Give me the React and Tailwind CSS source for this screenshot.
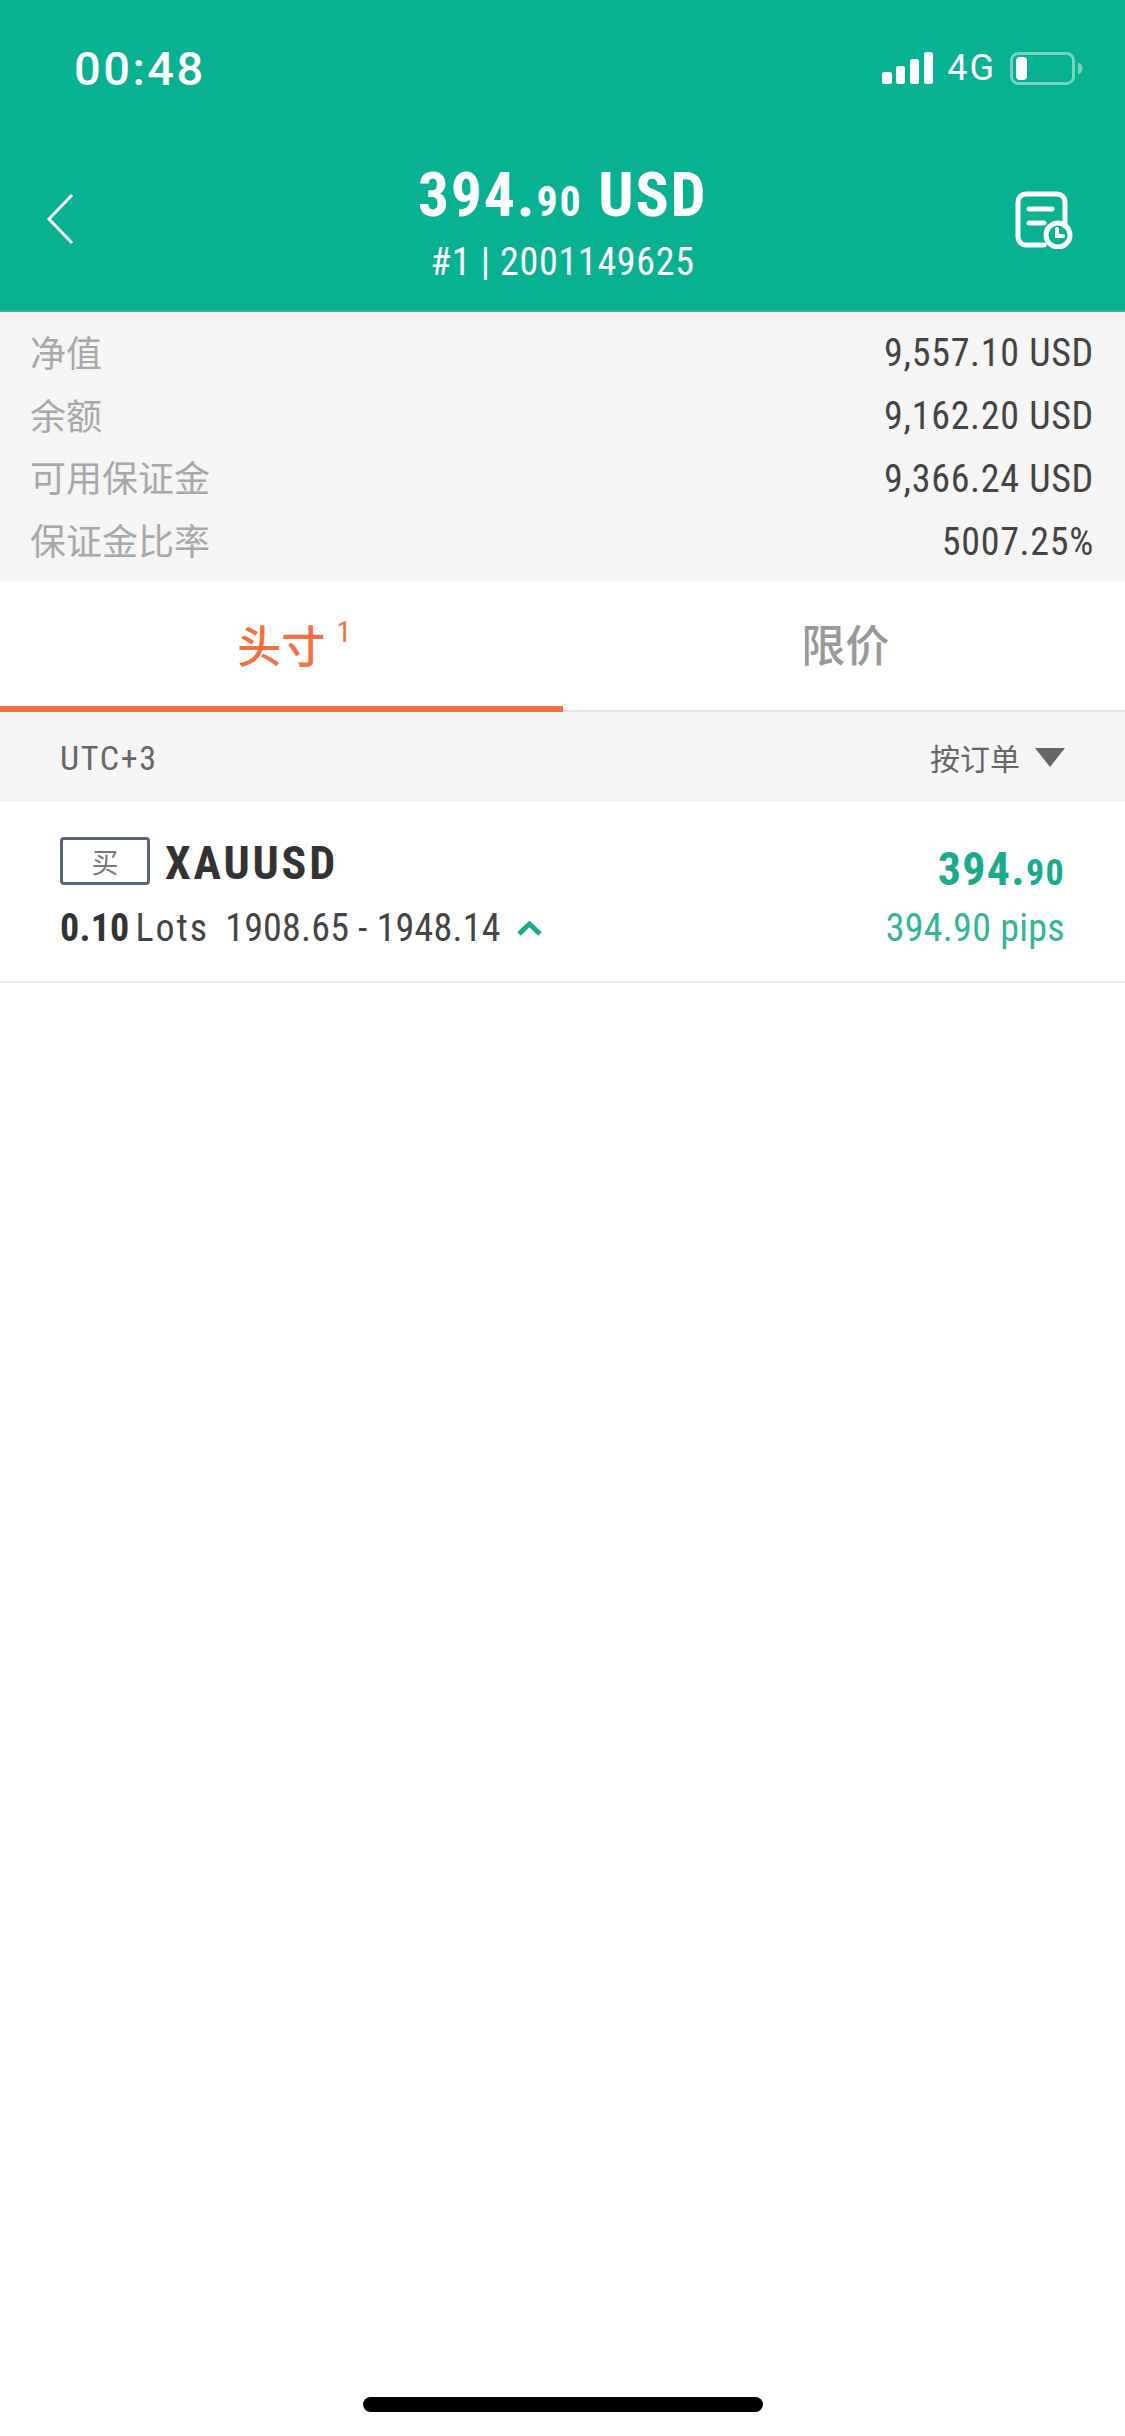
const din = "font-['Liberation_Sans_Narrow','Roboto_Condensed','Roboto','Noto_Sans_CJK_SC',sans-serif]";
const cjk = "font-['Noto_Sans_CJK_SC','Noto_Sans',sans-serif]";

function Signal() {
  return (
    <svg width="51" height="33" viewBox="0 0 51 33" fill="white">
      <rect x="0" y="20" width="10" height="12" rx="2.5" />
      <rect x="14" y="14" width="9" height="18" rx="2.5" />
      <rect x="28" y="7" width="9" height="25" rx="2.5" />
      <rect x="42" y="0" width="9" height="32" rx="2.5" />
    </svg>
  );
}

function Battery() {
  return (
    <svg width="73" height="33" viewBox="0 0 73 33" fill="none">
      <rect x="1.5" y="1.5" width="62" height="30" rx="7" stroke="white" strokeOpacity="0.45" strokeWidth="3" />
      <rect x="6" y="5" width="11" height="23" rx="4" fill="white" />
      <path d="M68 10.5c3 1 4.500 3.200 4.500 6s-1.500 5-4.500 6z" fill="white" fillOpacity="0.45" />
    </svg>
  );
}

function Back() {
  return (
    <svg className="mb-[12px]" width="28" height="52" viewBox="0 0 28 52" fill="none" stroke="white" strokeWidth="3">
      <path d="M26 2 3 26l23 24" />
    </svg>
  );
}

function Orders() {
  return (
    <svg className="mb-[10px]" width="58" height="58" viewBox="0 0 58 58" fill="none" stroke="white" strokeLinecap="round">
      <path d="M29 54H11a8 8 0 0 1-8-8V11a8 8 0 0 1 8-8h31a8 8 0 0 1 8 8v24" strokeWidth="5" />
      <path d="M14 18h23M14 32h15" strokeWidth="5" />
      <circle cx="43" cy="44" r="12" strokeWidth="5" />
      <path d="M42 38v7h6" strokeWidth="4" />
    </svg>
  );
}

function Stat({ label, value }) {
  return (
    <div className="flex h-[62.75px] items-center justify-between">
      <span className={`${cjk} -ml-[1px] pb-[5px] text-[36px] leading-none text-[#a8a8a8]`}>{label}</span>
      <span className={`${din} text-[38px] leading-none tracking-[0.7px] text-[#444444]`}>{value}</span>
    </div>
  );
}

export default function App() {
  return (
    <div className="flex min-h-[2436px] flex-col bg-white">
      <header className="h-[312px] border-b-2 border-[#3aaf98] bg-[#08b192] text-white">
        <div className="flex h-[164px] items-start justify-between pt-[46px] pr-[42px] pl-[74px]">
          <span className="font-['Roboto',sans-serif] text-[47px] font-medium leading-[46px] tracking-[2.5px]">00:48</span>
          <div className="flex items-center pt-[6px]">
            <Signal />
            <span className="mr-[14px] ml-[14px] font-['Roboto',sans-serif] text-[36px] leading-[33px] tracking-[2px]">4G</span>
            <Battery />
          </div>
        </div>
        <div className="flex items-center pr-[52px] pl-[46px]">
          <div className="flex flex-1 justify-start">
            <Back />
          </div>
          <div className={`${din} ml-[6px] flex flex-col items-center`}>
            <div className="text-[62px] font-bold leading-[62px] tracking-[1.7px]">
              394.<span className="text-[42px]">90</span> USD
            </div>
            <div className="mt-[6px] text-[38px] leading-[46px] tracking-[0.7px]">#1 | 2001149625</div>
          </div>
          <div className="flex flex-1 justify-end">
            <Orders />
          </div>
        </div>
      </header>

      <section className="bg-[#f5f5f5] pt-[10px] pr-[31px] pb-[8px] pl-[31px]">
        <Stat label="净值" value="9,557.10 USD" />
        <Stat label="余额" value="9,162.20 USD" />
        <Stat label="可用保证金" value="9,366.24 USD" />
        <Stat label="保证金比率" value="5007.25%" />
      </section>

      <nav className="grid h-[131px] grid-cols-2 border-b-2 border-[#e4e4e4]">
        <div className="relative -mb-[2px] flex items-center justify-center border-b-[6px] border-[#f4713f]">
          <span className={`${cjk} relative text-[44px] font-medium leading-none text-[#f4713f]`}>
            头寸
            <sup className={`${din} absolute -top-[5px] -right-[26px] text-[30px] font-normal leading-none`}>1</sup>
          </span>
        </div>
        <div className="flex items-center justify-center pb-[6px]">
          <span className={`${cjk} ml-[3px] text-[44px] font-medium leading-none text-[#999999]`}>限价</span>
        </div>
      </nav>

      <div className="flex h-[90px] items-center justify-between bg-[#f5f5f5] pr-[60px] pl-[60px] text-[#666666]">
        <span className={`${din} pt-[2px] text-[34px] leading-none tracking-[1.7px]`}>UTC+3</span>
        <div className="flex items-center gap-[15px]">
          <span className={`${cjk} text-[30px] leading-none`}>按订单</span>
          <svg width="30" height="19" viewBox="0 0 30 19" fill="#666666">
            <path d="M0 0h30L15 19z" />
          </svg>
        </div>
      </div>

      <div className="flex h-[181px] items-start justify-between border-b-2 border-[#eeeeee] pt-[35px] pr-[60px] pl-[60px]">
        <div>
          <div className="flex h-[48px] items-center gap-[15px]">
            <span className={`${cjk} flex h-[48px] w-[90px] items-center justify-center rounded-[4px] border-[3px] border-[#5a6478] text-[27px] leading-none text-[#777777]`}>买</span>
            <span className={`${din} pt-[4px] text-[46px] font-bold leading-none tracking-[2.8px] text-[#333333]`}>XAUUSD</span>
          </div>
          <div className={`${din} mt-[23px] flex h-[40px] items-center text-[38px] leading-none tracking-[0.2px] text-[#444444]`}>
            <b className="text-[#333333]">0.10</b>
            <span className="ml-[6px] tracking-[2px]">Lots</span>
            <span className="ml-[16px]">1908.65 - 1948.14</span>
            <svg className="ml-[16px]" width="25" height="15" viewBox="0 0 25 15" fill="none" stroke="#1aaa8c" strokeWidth="5">
              <path d="M2 13 12.500 3 23 13" />
            </svg>
          </div>
        </div>
        <div className={`${din} flex flex-col items-end`}>
          <div className="mt-[10px] text-[46px] font-bold leading-[44px] tracking-[1.3px] text-[#1aaa8c]">
            394.<span className="text-[36px]">90</span>
          </div>
          <div className="mt-[13px] text-[38px] leading-[40px] tracking-[0.3px] text-[#35b497]">394.90 pips</div>
        </div>
      </div>

      <div className="flex flex-1 items-end justify-center pb-[24px]">
        <div className="h-[15px] w-[400px] rounded-full bg-black" />
      </div>
    </div>
  );
}
